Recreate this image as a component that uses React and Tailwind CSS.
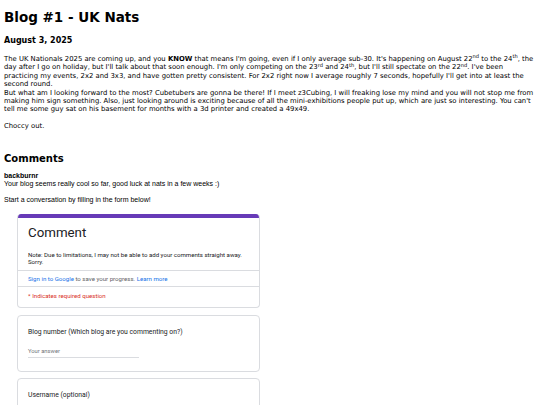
export default function App() {
  return (
    <div className="min-h-[405px] bg-white px-[4px] pt-[9px] text-black font-['DejaVu_Sans',Verdana,sans-serif] overflow-hidden">
      <h1 className="text-[13.5px] font-bold leading-[16px]">Blog #1 - UK Nats</h1>
      <h2 className="mt-[11px] text-[8px] font-bold leading-[10px]">August 3, 2025</h2>
      <div className="mt-[9px] text-[6.85px] leading-[8.4px]">
        <p>
          The UK Nationals 2025 are coming up, and you <b>KNOW</b> that means I'm going, even if I only average sub-30. It's happening on August 22<sup>nd</sup> to the 24<sup>th</sup>, the day after I go on holiday, but I'll talk about that soon enough. I'm only competing on the 23<sup>rd</sup> and 24<sup>th</sup>, but I'll still spectate on the 22<sup>nd</sup>. I've been practicing my events, 2x2 and 3x3, and have gotten pretty consistent. For 2x2 right now I average roughly 7 seconds, hopefully I'll get into at least the second round.
          <br />
          But what am I looking forward to the most? Cubetubers are gonna be there! If I meet z3Cubing, I will freaking lose my mind and you will not stop me from making him sign something. Also, just looking around is exciting because of all the mini-exhibitions people put up, which are just so interesting. You can't tell me some guy sat on his basement for months with a 3d printer and created a 49x49.
          <br />
          <br />
          Choccy out.
        </p>
      </div>
      <h2 className="mt-[22px] text-[10px] font-bold leading-[12px]">Comments</h2>
      <div className="mt-[7px] font-['Liberation_Sans',Arial,sans-serif] text-[7px] leading-[8px]">
        <div className="font-bold">backburnr</div>
        <div>Your blog seems really cool so far, good luck at nats in a few weeks :)</div>
        <div className="mt-[8px]">Start a conversation by filling in the form below!</div>
      </div>
      <div className="ml-[13px] mt-[10px] w-[243px] font-['Roboto',sans-serif]">
        <div className="rounded-[4px] border border-[#dadce0] border-t-0 overflow-hidden bg-white">
          <div className="h-[4px] bg-[#673ab7]" />
          <div className="px-[10px] pt-[6px] pb-[5px]">
            <div className="text-[13.3px] leading-[18px] text-[#202124]">Comment</div>
            <div className="mt-[9px] text-[6.1px] leading-[7px] text-[#202124]">
              Note: Due to limitations, I may not be able to add your comments straight away. Sorry.
            </div>
          </div>
          <div className="border-t border-[#dadce0] px-[10px] py-[4px] text-[6.1px] leading-[7px] text-[#5f6368]">
            <span className="text-[#1a73e8]">Sign in to Google</span> to save your progress. <span className="text-[#1a73e8]">Learn more</span>
          </div>
          <div className="border-t border-[#dadce0] px-[10px] pt-[5px] pb-[8px] text-[6.1px] leading-[7px] text-[#d93025]">
            * Indicates required question
          </div>
        </div>
        <div className="mt-[7px] rounded-[4px] border border-[#dadce0] bg-white px-[10px] pt-[12px] pb-[13px]">
          <div className="text-[6.8px] leading-[8px] text-[#202124]">Blog number (Which blog are you commenting on?)</div>
          <div className="mt-[12px] w-[111px] border-b border-[#dadce0] pb-[3px] text-[5.8px] leading-[6px] text-[#70757a]">Your answer</div>
        </div>
        <div className="mt-[6px] rounded-[4px] border border-[#dadce0] bg-white px-[10px] pt-[12px] pb-[30px]">
          <div className="text-[6.8px] leading-[8px] text-[#202124]">Username (optional)</div>
        </div>
      </div>
    </div>
  );
}
